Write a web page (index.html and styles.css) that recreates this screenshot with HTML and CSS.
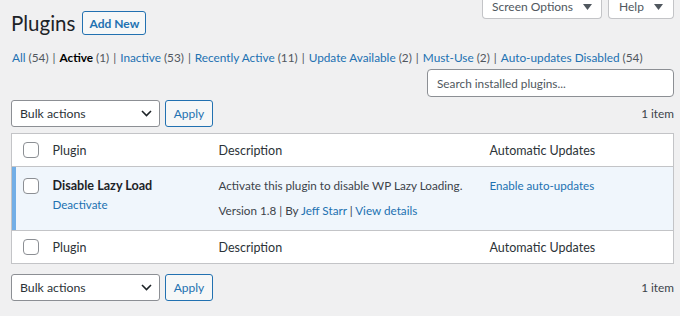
FILE: index.html
```html
<!DOCTYPE html>
<html lang="en">
<head>
  <meta charset="UTF-8" />
  <title>Plugins</title>
  <link rel="stylesheet" href="styles.css">
</head>
<body>
  <div class="wrap">
    <div class="top">
      <div class="title-row">
        <h1>Plugins</h1>
        <a class="btn-outline add-new" href="#">Add New</a>
      </div>
      <div class="tabs">
        <button class="tab tab-screen">Screen Options
          <svg width="9" height="6" viewBox="0 0 9 6"><path d="M0 0h9L4.5 6z" fill="#50575e"/></svg>
        </button>
        <button class="tab tab-help">Help
          <svg width="9" height="6" viewBox="0 0 9 6"><path d="M0 0h9L4.5 6z" fill="#50575e"/></svg>
        </button>
      </div>
    </div>

    <ul class="filters">
      <li><a href="#">All <span class="count">(54)</span></a><span class="sep">|</span></li>
      <li><a href="#" class="current">Active <span class="count">(1)</span></a><span class="sep">|</span></li>
      <li><a href="#">Inactive <span class="count">(53)</span></a><span class="sep">|</span></li>
      <li><a href="#">Recently Active <span class="count">(11)</span></a><span class="sep">|</span></li>
      <li><a href="#">Update Available <span class="count">(2)</span></a><span class="sep">|</span></li>
      <li><a href="#">Must-Use <span class="count">(2)</span></a><span class="sep">|</span></li>
      <li><a href="#">Auto-updates Disabled <span class="count">(54)</span></a></li>
    </ul>

    <div class="search-row">
      <input class="search" type="search" placeholder="Search installed plugins...">
    </div>

    <div class="tablenav">
      <div class="actions">
        <div class="select">
          <span>Bulk actions</span>
          <svg width="11" height="7" viewBox="0 0 11 7"><path d="M1 1l4.5 4.5L10 1" fill="none" stroke="#1d2327" stroke-width="1.6"/></svg>
        </div>
        <button class="btn-outline apply">Apply</button>
      </div>
      <span class="num">1 item</span>
    </div>

    <table class="plugins">
      <colgroup>
        <col class="c-check">
        <col class="c-name">
        <col class="c-desc">
        <col>
      </colgroup>
      <thead>
        <tr>
          <th class="check"><span class="box"></span></th>
          <th>Plugin</th>
          <th>Description</th>
          <th>Automatic Updates</th>
        </tr>
      </thead>
      <tbody>
        <tr class="active">
          <td class="check"><span class="box"></span></td>
          <td>
            <strong class="plugin-title">Disable Lazy Load</strong>
            <div class="row-actions"><a href="#">Deactivate</a></div>
          </td>
          <td>
            <p class="desc">Activate this plugin to disable WP Lazy Loading.</p>
            <p class="meta">Version 1.8 | By <a href="#">Jeff Starr</a> | <a href="#">View details</a></p>
          </td>
          <td><a href="#" class="auto-link">Enable auto-updates</a></td>
        </tr>
      </tbody>
      <tfoot>
        <tr>
          <th class="check"><span class="box"></span></th>
          <th>Plugin</th>
          <th>Description</th>
          <th>Automatic Updates</th>
        </tr>
      </tfoot>
    </table>

    <div class="tablenav bottom">
      <div class="actions">
        <div class="select">
          <span>Bulk actions</span>
          <svg width="11" height="7" viewBox="0 0 11 7"><path d="M1 1l4.5 4.5L10 1" fill="none" stroke="#1d2327" stroke-width="1.6"/></svg>
        </div>
        <button class="btn-outline apply">Apply</button>
      </div>
      <span class="num">1 item</span>
    </div>
  </div>
</body>
</html>
```

FILE: styles.css
```css
* { box-sizing: border-box; }

body {
  margin: 0;
  background: #f0f0f1;
  color: #3c434a;
  font-family: 'Lato', sans-serif;
  font-size: 12px;
  line-height: 19px;
}

a {
  color: #2271b1;
  text-decoration: none;
}

.wrap {
  padding: 0 6px 0 11px;
}

.top {
  display: flex;
  justify-content: space-between;
  align-items: flex-start;
}

.title-row {
  display: flex;
  align-items: center;
  gap: 7px;
  padding-top: 11px;
}

h1 {
  margin: 0;
  font-size: 20.5px;
  font-weight: 400;
  line-height: 24px;
  color: #1d2327;
}

.btn-outline {
  display: inline-flex;
  align-items: center;
  justify-content: center;
  border: 1px solid #2271b1;
  border-radius: 3px;
  background: #f6f7f7;
  color: #2271b1;
  font-family: inherit;
  font-size: 12px;
}

.add-new {
  width: 64px;
  height: 24px;
  font-weight: 700;
}

.tabs {
  display: flex;
  gap: 6px;
}

.tab {
  display: flex;
  align-items: center;
  justify-content: center;
  gap: 10px;
  height: 19px;
  padding: 0 0 5px;
  background: #fff;
  border: 1px solid #c3c4c7;
  border-top: none;
  border-radius: 0 0 4px 4px;
  color: #50575e;
  font-family: inherit;
  font-size: 12px;
}

.tab-screen { width: 120px; }
.tab-help { width: 66px; }

.filters {
  list-style: none;
  display: flex;
  margin: 13px 0 0;
  padding: 0 0 0 1px;
  line-height: 20px;
  font-size: 11.8px;
  color: #50575e;
}

.filters li {
  white-space: nowrap;
}

.filters .sep {
  margin: 0 4px;
  color: #50575e;
}

.filters .count {
  color: #50575e;
}

.filters .current {
  color: #000;
  font-weight: 700;
}

.filters .current .count {
  font-weight: 400;
}

.search-row {
  display: flex;
  justify-content: flex-end;
  margin-top: 1px;
}

.search {
  width: 247px;
  height: 28px;
  padding: 0 9px;
  border: 1px solid #8c8f94;
  border-radius: 4px;
  background: #fff;
  font-family: inherit;
  font-size: 11.8px;
}

.search::placeholder {
  color: #50575e;
}

.tablenav {
  display: flex;
  justify-content: space-between;
  align-items: center;
  margin-top: 3px;
  margin-bottom: 6px;
}

.tablenav.bottom {
  margin-top: 10px;
}

.actions {
  display: flex;
  gap: 5px;
}

.select {
  display: flex;
  justify-content: space-between;
  align-items: center;
  width: 149px;
  height: 27px;
  padding: 0 7px 0 8px;
  border: 1px solid #8c8f94;
  border-radius: 3px;
  background: #fff;
  color: #2c3338;
  font-size: 12.3px;
}

.apply {
  width: 48px;
  height: 27px;
  font-size: 12px;
}

.num {
  color: #3c434a;
  font-size: 11.8px;
}

.plugins {
  width: 100%;
  border: 1px solid #c3c4c7;
  border-collapse: collapse;
  table-layout: fixed;
  background: #fff;
}

.c-check { width: 31px; }
.c-name { width: 166px; }
.c-desc { width: 271px; }

th {
  height: 33px;
  padding: 0 10px;
  text-align: left;
  font-weight: 400;
  color: #2c3338;
  font-size: 12.5px;
}

thead tr { border-bottom: 1px solid #c3c4c7; }
tfoot tr { border-top: 1px solid #c3c4c7; }

.check {
  padding: 0 0 0 11px;
}

.box {
  display: block;
  width: 16px;
  height: 16px;
  border: 1px solid #8c8f94;
  border-radius: 4px;
  background: #fff;
}

.active td {
  background: #f0f6fc;
  vertical-align: top;
  padding: 9px 10px 10px;
}

.active td.check {
  box-shadow: inset 4px 0 0 #72aee6;
  padding: 11px 0 0 11px;
}

.plugin-title {
  display: block;
  font-weight: 700;
  color: #1d2327;
  font-size: 12.6px;
}

.row-actions {
  line-height: 19px;
  font-size: 11.6px;
}

.desc, .meta {
  margin: 0;
  white-space: nowrap;
  font-size: 11.7px;
}

.meta {
  margin-top: 6px;
}

.auto-link {
  display: block;
  font-size: 11.6px;
}
```
